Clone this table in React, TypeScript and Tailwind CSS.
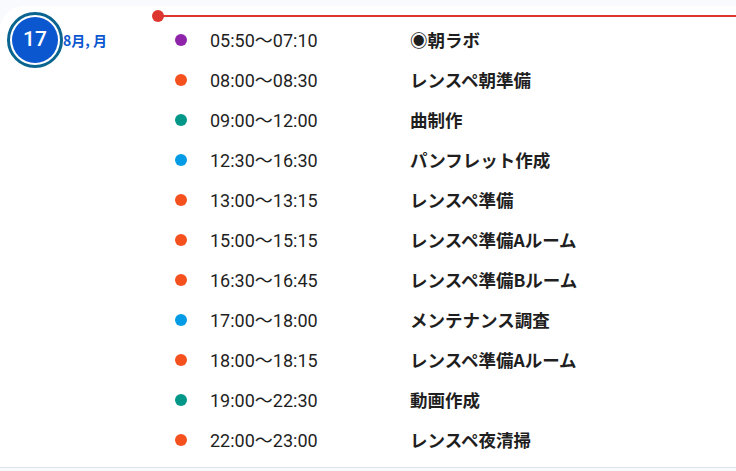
const EVENTS = [
  { time: '05:50〜07:10', title: '◉朝ラボ', color: 'bg-[#8e24aa]' },
  { time: '08:00〜08:30', title: 'レンスペ朝準備', color: 'bg-[#f4511e]' },
  { time: '09:00〜12:00', title: '曲制作', color: 'bg-[#009688]' },
  { time: '12:30〜16:30', title: 'パンフレット作成', color: 'bg-[#039be5]' },
  { time: '13:00〜13:15', title: 'レンスペ準備', color: 'bg-[#f4511e]' },
  { time: '15:00〜15:15', title: 'レンスペ準備Aルーム', color: 'bg-[#f4511e]' },
  { time: '16:30〜16:45', title: 'レンスペ準備Bルーム', color: 'bg-[#f4511e]' },
  { time: '17:00〜18:00', title: 'メンテナンス調査', color: 'bg-[#039be5]' },
  { time: '18:00〜18:15', title: 'レンスペ準備Aルーム', color: 'bg-[#f4511e]' },
  { time: '19:00〜22:30', title: '動画作成', color: 'bg-[#009688]' },
  { time: '22:00〜23:00', title: 'レンスペ夜清掃', color: 'bg-[#f4511e]' },
];

export default function App() {
  return (
    <div className="w-[736px] h-[471px] bg-[#f8fafd] pt-[6px] overflow-hidden font-['Roboto','Noto_Sans_CJK_JP',sans-serif]">
      <div className="bg-white rounded-tl-[24px] border-b border-[#dde3ea] flex">
        {/* Day */}
        <div className="w-[152px] shrink-0 flex items-start pt-[6px] pl-[7px]">
          <div className="w-[56px] h-[56px] rounded-full border-[3px] border-[#0a6490] p-[2px] shrink-0">
            <div className="w-full h-full rounded-full bg-[#0b57d0] flex items-center justify-center text-white text-[21px] font-medium">
              17
            </div>
          </div>
          <div className="mt-[20px] text-[14px] font-bold text-[#0b57d0] font-['Noto_Sans_CJK_JP',sans-serif] leading-[16px]">
            8月, 月
          </div>
        </div>

        {/* Events */}
        <div className="flex-1 relative pt-[14px] pb-[7px]">
          <div className="absolute left-0 right-0 top-[4px] h-[12px] flex items-center">
            <div className="w-[12px] h-[12px] rounded-full bg-[#dc362e] shrink-0" />
            <div className="flex-1 h-[2px] bg-[#dc362e] -ml-[6px]" />
          </div>
          {EVENTS.map((e, i) => (
            <div key={i} className="h-[40px] flex items-center">
              <div className="w-[23px] shrink-0" />
              <div className={`w-[12px] h-[12px] rounded-full ${e.color} shrink-0`} />
              <div className="w-[23px] shrink-0" />
              <div className="w-[200px] shrink-0 text-[18px] text-[#1f1f1f]">{e.time}</div>
              <div className="text-[17.5px] font-bold text-[#1f1f1f] font-['Noto_Sans_CJK_JP',sans-serif]">{e.title}</div>
            </div>
          ))}
        </div>
      </div>
    </div>
  );
}
